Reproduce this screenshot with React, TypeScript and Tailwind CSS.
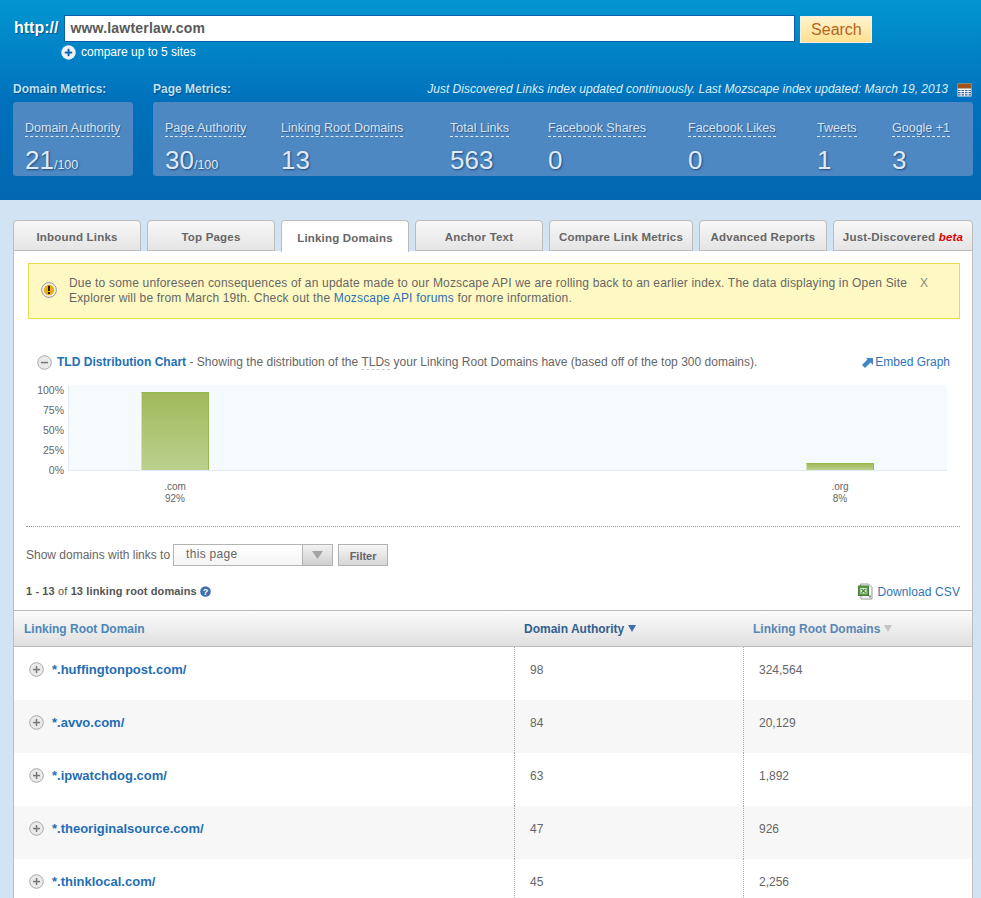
import type { ReactElement } from 'react';

const font = { sans: "font-['Liberation_Sans',Arial,sans-serif]" };

const pageMetrics = [
  { label: 'Page Authority', value: '30', suffix: '/100', width: 'w-[116px]' },
  { label: 'Linking Root Domains', value: '13', width: 'w-[169px]' },
  { label: 'Total Links', value: '563', width: 'w-[98px]' },
  { label: 'Facebook Shares', value: '0', width: 'w-[140px]' },
  { label: 'Facebook Likes', value: '0', width: 'w-[129px]' },
  { label: 'Tweets', value: '1', width: 'w-[75px]' },
  { label: 'Google +1', value: '3', width: 'w-[70px]' },
];

const tabs = [
  { label: 'Inbound Links', width: 'w-[128px]' },
  { label: 'Top Pages', width: 'w-[128px]' },
  { label: 'Linking Domains', width: 'w-[128px]', active: true },
  { label: 'Anchor Text', width: 'w-[128px]' },
  { label: 'Compare Link Metrics', width: 'w-[144px]' },
  { label: 'Advanced Reports', width: 'w-[128px]' },
];

const rows = [
  { domain: '*.huffingtonpost.com/', authority: '98', roots: '324,564' },
  { domain: '*.avvo.com/', authority: '84', roots: '20,129' },
  { domain: '*.ipwatchdog.com/', authority: '63', roots: '1,892' },
  { domain: '*.theoriginalsource.com/', authority: '47', roots: '926' },
  { domain: '*.thinklocal.com/', authority: '45', roots: '2,256' },
];

function Metric(props: { label: string; value: string; suffix?: string; width: string }): ReactElement {
  return (
    <div className={`${props.width} shrink-0`}>
      <span className="inline-block border-b border-dashed border-[#dce8f4] text-[12.5px] leading-[14px] pb-[1px] text-[#d5e3f0] [text-shadow:1px_1px_1px_rgba(0,40,90,0.45)]">
        {props.label}
      </span>
      <div className="mt-[5px] text-[26px] leading-[32px] text-[#dfeaf4] [text-shadow:1px_1px_2px_rgba(0,30,80,0.6)]">
        {props.value}
        {props.suffix && <span className="text-[12.5px]">{props.suffix}</span>}
      </div>
    </div>
  );
}

function RoundIcon(props: { minus?: boolean }): ReactElement {
  return (
    <svg width="15" height="15" viewBox="0 0 15 15" className="shrink-0">
      <circle cx="7.5" cy="7.5" r="6.8" fill="#eaeaea" stroke="#a9a9a9" />
      <rect x="4" y="6.8" width="7" height="1.5" fill="#777" />
      {!props.minus && <rect x="6.8" y="4" width="1.5" height="7" fill="#777" />}
    </svg>
  );
}

function CalendarIcon(): ReactElement {
  return (
    <svg width="15" height="14" viewBox="0 0 15 14" className="shrink-0">
      <rect x="0.5" y="0.5" width="14" height="13" fill="#f4f7fa" />
      <rect x="0.5" y="0.5" width="14" height="5" fill="#a0551f" />
      <path d="M1 7.5h13M1 9.7h13M1 11.9h13" stroke="#35618f" strokeWidth="1.2" />
      <path d="M4 6v7M7.5 6v7M11 6v7" stroke="#f4f7fa" strokeWidth="1" />
    </svg>
  );
}

function AlertIcon(): ReactElement {
  return (
    <svg width="16" height="16" viewBox="0 0 16 16" className="shrink-0">
      <circle cx="8" cy="8" r="7.4" fill="#f2f2e6" stroke="#9a9a90" />
      <circle cx="8" cy="8" r="5.2" fill="#e9ac12" />
      <rect x="7" y="3.8" width="2" height="5.2" fill="#222" />
      <rect x="7" y="10" width="2" height="2" fill="#222" />
    </svg>
  );
}

function ExcelIcon(): ReactElement {
  return (
    <svg width="15" height="17" viewBox="0 0 15 17" className="shrink-0">
      <path d="M2.5 1h8l3.5 3.5V16h-11z" fill="#f5f5f5" stroke="#9a9a9a" />
      <rect x="0.5" y="3" width="10" height="9.5" fill="#5d9a4b" stroke="#487a3a" />
      <rect x="2.5" y="5" width="6" height="5.5" fill="#e8f0e0" />
      <path d="M3.5 5.8l4 4M7.5 5.8l-4 4" stroke="#3f7a34" strokeWidth="1.2" />
      <path d="M12 12.5v2" stroke="#444" strokeWidth="1.2" />
    </svg>
  );
}

export default function App(): ReactElement {
  return (
    <div className={`${font.sans} flex h-[898px] w-[981px] flex-col overflow-hidden bg-[#d2e4f3]`}>
      <header className="h-[200px] shrink-0 bg-[linear-gradient(to_bottom,#0296d1_0%,#0071bc_50%,#0467b1_100%)] pt-[15px]">
        <div className="flex items-start pl-[14px]">
          <span className="mr-[6px] text-[16px] leading-[26px] font-bold text-white [text-shadow:1px_1px_1px_rgba(0,40,90,0.6)]">
            http://
          </span>
          <div className="flex h-[27px] w-[731px] items-center border border-[#0b5ea8] bg-white pl-[5px] text-[14px] font-bold tracking-[0.2px] text-[#595959]">
            www.lawterlaw.com
          </div>
          <button
            type="button"
            className="mt-[1px] ml-[5px] h-[27px] w-[72px] border border-[#f3f0df] bg-[linear-gradient(to_bottom,#fff3cf,#ffe08e)] text-center text-[16px] leading-[24px] text-[#b2651f]"
          >
            Search
          </button>
        </div>
        <div className="mt-[2px] ml-[61px] flex items-center gap-[5px]">
          <svg width="15" height="15" viewBox="0 0 15 15" className="shrink-0">
            <circle cx="7.5" cy="7.5" r="7.2" fill="#eef2f6" />
            <rect x="3.8" y="6.6" width="7.4" height="1.9" fill="#0a62ad" />
            <rect x="6.6" y="3.8" width="1.9" height="7.4" fill="#0a62ad" />
          </svg>
          <span className="text-[12px] leading-[15px] text-white">compare up to 5 sites</span>
        </div>

        <div className="mt-[22px] flex items-start pl-[13px]">
          <section className="w-[120px] shrink-0">
            <h2 className="text-[12px] leading-[15px] font-bold text-[#bfe0f3] [text-shadow:1px_1px_1px_rgba(0,40,90,0.5)]">
              Domain Metrics:
            </h2>
            <div className="mt-[5px] h-[74px] rounded-[3px] bg-[#4d88c2] pt-[13px] pl-[12px]">
              <Metric label="Domain Authority" value="21" suffix="/100" width="w-[105px]" />
            </div>
          </section>
          <section className="ml-[20px] w-[820px] shrink-0">
            <div className="flex items-center justify-between pr-[1px]">
              <h2 className="text-[12px] leading-[15px] font-bold text-[#bfe0f3] [text-shadow:1px_1px_1px_rgba(0,40,90,0.5)]">
                Page Metrics:
              </h2>
              <div className="flex items-center gap-[9px]">
                <span className="text-[12px] leading-[15px] text-[#dcedf7] italic">
                  Just Discovered Links index updated continuously. Last Mozscape index updated: March 19, 2013
                </span>
                <CalendarIcon />
              </div>
            </div>
            <div className="mt-[5px] flex h-[74px] rounded-[3px] bg-[#4d88c2] pt-[13px] pl-[12px]">
              {pageMetrics.map((m) => (
                <Metric key={m.label} {...m} />
              ))}
            </div>
          </section>
        </div>
      </header>

      <main className="flex min-h-0 flex-1 flex-col pt-[20px] pr-[8px] pl-[13px]">
        <nav className="flex h-[31px] shrink-0 gap-[6px]">
          {tabs.map((t) => (
            <div
              key={t.label}
              className={`${t.width} ${
                t.active
                  ? 'relative z-10 h-[32px] border-b-0 bg-white'
                  : 'h-[31px] bg-[linear-gradient(to_bottom,#f7f7f7,#e5e5e5)]'
              } flex shrink-0 items-center justify-center rounded-t-[4px] border border-[#bcbcbc] pt-[4px] text-[11.5px] font-bold tracking-[0.2px] text-[#666]`}
            >
              {t.label}
            </div>
          ))}
          <div className="flex h-[31px] w-[140px] shrink-0 items-center justify-center rounded-t-[4px] border border-[#bcbcbc] bg-[linear-gradient(to_bottom,#f7f7f7,#e5e5e5)] pt-[5px] text-[11.5px] font-bold tracking-[0.2px] text-[#666]">
            Just-Discovered&nbsp;<em className="text-[#e00000]">beta</em>
          </div>
        </nav>

        <div className="min-h-0 flex-1 border-x border-[#bcbcbc] bg-white pt-[12px]">
          <div className="mr-[12px] ml-[14px] flex h-[56px] items-start border border-[#e8dc48] bg-[#fef9c3] pt-[12px] pl-[12px] text-[12px] leading-[15px] tracking-[0.18px] text-[#666]">
            <div className="mt-[6px] mr-[12px]">
              <AlertIcon />
            </div>
            <p className="w-[840px]">
              Due to some unforeseen consequences of an update made to our Mozscape API we are rolling back to an earlier
              index. The data displaying in Open Site Explorer will be from March 19th. Check out the{' '}
              <span className="text-[#2f6db5]">Mozscape API forums</span> for more information.
            </p>
            <span className="ml-[11px] text-[#888]">X</span>
          </div>

          <div className="mt-[36px] mr-[22px] ml-[23px] flex items-center justify-between">
            <div className="flex items-center gap-[5px] text-[12px] leading-[15px] tracking-[0.02px] text-[#666]">
              <RoundIcon minus />
              <p>
                <span className="font-bold text-[#2271b3]">TLD Distribution Chart</span> - Showing the distribution of the{' '}
                <span className="border-b border-dashed border-[#ccc]">TLDs</span> your Linking Root Domains have (based off
                of the top 300 domains).
              </p>
            </div>
            <div className="flex items-center gap-[2px] text-[12px] leading-[15px] text-[#2f74b8]">
              <svg width="11" height="11" viewBox="0 0 11 11" className="shrink-0">
                <path d="M4 1h7v7L8.6 5.6 3 11 0 8l5.4-5.6z" fill="#3f87c8" />
              </svg>
              Embed Graph
            </div>
          </div>

          <div className="mt-[14px] flex">
            <div className="flex h-[92px] w-[50px] shrink-0 flex-col items-end justify-between text-[10.5px] leading-[12px] text-[#666]">
              <span>100%</span>
              <span>75%</span>
              <span>50%</span>
              <span>25%</span>
              <span>0%</span>
            </div>
            <div className="mt-[1px] ml-[4px] flex h-[86px] w-[879px] items-end gap-[597px] border-b border-l border-[#dfecf7] bg-[#f5fafd] pl-[72px]">
              <div className="h-[78px] w-[68px] border-t border-r border-l border-[#93b94f] border-l-[#d5e2ac] bg-[linear-gradient(to_bottom,#a1b95b,#bbd08e)]" />
              <div className="h-[7px] w-[68px] border-t border-r border-l border-[#93b94f] border-l-[#d5e2ac] bg-[linear-gradient(to_bottom,#a1b95b,#bbd08e)]" />
            </div>
          </div>
          <div className="mt-[5px] flex gap-[597px] pl-[127px] text-center text-[10px] leading-[12px] text-[#666]">
            <div className="w-[68px]">
              .com
              <br />
              92%
            </div>
            <div className="w-[68px]">
              .org
              <br />
              8%
            </div>
          </div>

          <div className="mt-[21px] mr-[12px] ml-[12px] border-t border-dotted border-[#999]" />

          <div className="mt-[17px] ml-[12px] flex items-center text-[12px] text-[#666]">
            <span>Show domains with links to</span>
            <div className="ml-[3px] flex h-[22px] w-[160px] border border-[#b3b3b3] bg-[linear-gradient(to_bottom,#fff,#f4f4f4)]">
              <span className="flex-1 pl-[12px] leading-[19px] tracking-[0.3px]">this page</span>
              <div className="flex w-[30px] items-center justify-center border-l border-[#b3b3b3] bg-[linear-gradient(to_bottom,#f2f2f2,#cfcfcf)]">
                <svg width="11" height="8" viewBox="0 0 11 8">
                  <path d="M0 0h11L5.5 8z" fill="#a3a3a3" />
                </svg>
              </div>
            </div>
            <button
              type="button"
              className="ml-[5px] h-[22px] w-[50px] border border-[#b3b3b3] bg-[linear-gradient(to_bottom,#f7f7f7,#d6d6d6)] pt-[2px] text-center text-[11px] font-bold text-[#666]"
            >
              Filter
            </button>
          </div>

          <div className="mt-[17px] mr-[12px] ml-[12px] flex h-[17px] items-center justify-between">
            <div className="flex items-center gap-[3px] text-[11px] font-bold tracking-[0.12px] text-[#555]">
              <span>
                1 - 13 <span className="font-normal">of</span> 13 linking root domains
              </span>
              <svg width="11" height="11" viewBox="0 0 11 11" className="shrink-0">
                <circle cx="5.5" cy="5.5" r="5.3" fill="#3f6eae" />
                <text x="5.5" y="8.6" textAnchor="middle" fontSize="9" fontWeight="700" fill="#fff">
                  ?
                </text>
              </svg>
            </div>
            <div className="flex items-center gap-[4px] text-[12px] tracking-[0.1px] text-[#2f74b8]">
              <ExcelIcon />
              Download CSV
            </div>
          </div>

          <div className="mt-[10px] grid h-[37px] grid-cols-[500px_229px_1fr] items-center border-y border-[#bcbcbc] bg-[linear-gradient(to_bottom,#fbfbfb,#e0e0e0)] text-[12px] font-bold">
            <span className="pl-[10px] text-[#4c86b8]">Linking Root Domain</span>
            <span className="flex items-center gap-[4px] pl-[10px] text-[#2f6090]">
              Domain Authority
              <svg width="8" height="7" viewBox="0 0 8 7">
                <path d="M0 0h8L4 7z" fill="#3f6eae" />
              </svg>
            </span>
            <span className="flex items-center gap-[4px] pl-[10px] text-[#5a87b6]">
              Linking Root Domains
              <svg width="8" height="7" viewBox="0 0 8 7">
                <path d="M0 0h8L4 7z" fill="#c4c4c4" />
              </svg>
            </span>
          </div>

          {rows.map((r, i) => (
            <div
              key={r.domain}
              className={`grid h-[53px] grid-cols-[500px_229px_1fr] text-[12px] ${i % 2 === 1 ? 'bg-[#f7f7f7]' : 'bg-white'}`}
            >
              <div className="flex items-start gap-[8px] pt-[15px] pl-[15px]">
                <RoundIcon />
                <span className="text-[13px] leading-[15px] font-bold text-[#1f6eb5]">{r.domain}</span>
              </div>
              <div className="border-l border-dotted border-[#aaa] pt-[16px] pl-[15px] leading-[14px] text-[#666]">
                {r.authority}
              </div>
              <div className="border-l border-dotted border-[#aaa] pt-[16px] pl-[15px] leading-[14px] text-[#666]">
                {r.roots}
              </div>
            </div>
          ))}
        </div>
      </main>
    </div>
  );
}
